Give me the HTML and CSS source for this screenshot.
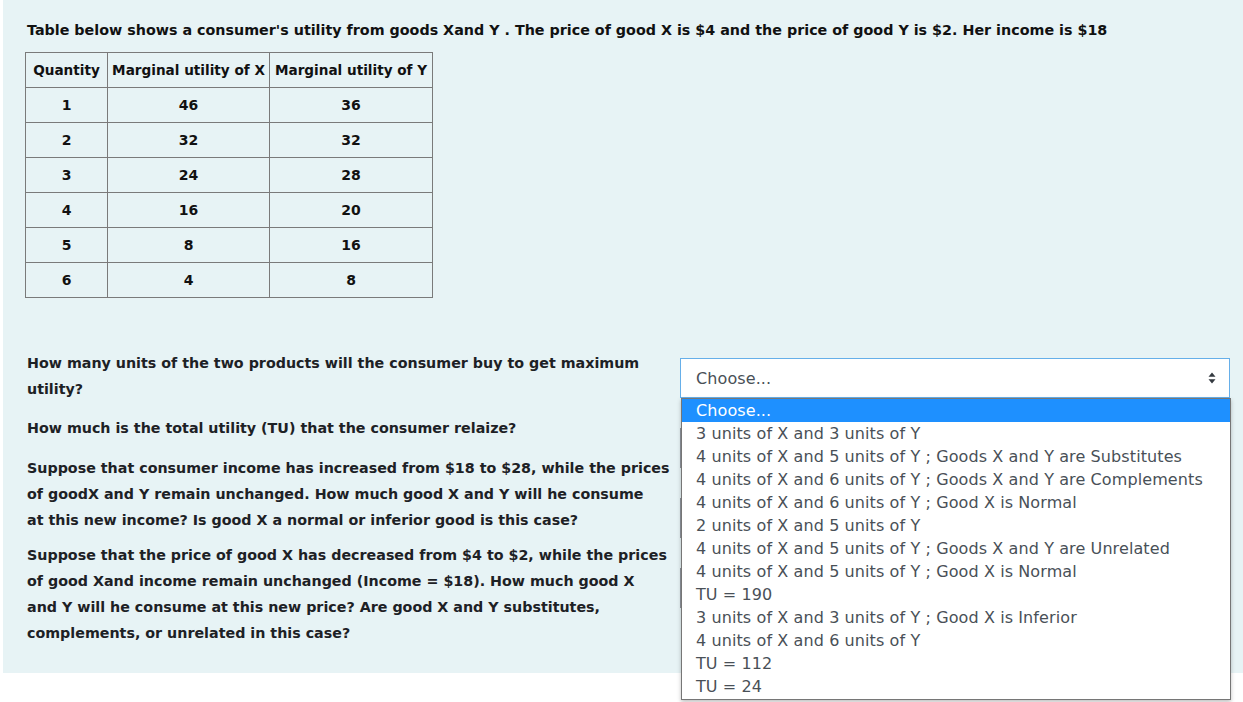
FILE: index.html
```html
<!DOCTYPE html>
<html>
<head>
<meta charset="utf-8">
<link rel="stylesheet" href="styles.css">
</head>
<body>
<div class="panel">
  <p class="title">Table below shows a consumer's utility from goods Xand Y . The price of good X is $4 and the price of good Y is $2. Her income is $18</p>
  <table class="mu">
    <tr><th class="c1">Quantity</th><th class="c2">Marginal utility of X</th><th class="c3">Marginal utility of Y</th></tr>
    <tr><td>1</td><td>46</td><td>36</td></tr>
    <tr><td>2</td><td>32</td><td>32</td></tr>
    <tr><td>3</td><td>24</td><td>28</td></tr>
    <tr><td>4</td><td>16</td><td>20</td></tr>
    <tr><td>5</td><td>8</td><td>16</td></tr>
    <tr><td>6</td><td>4</td><td>8</td></tr>
  </table>
  <div class="qa">
    <div class="questions">
      <p class="q q1">How many units of the two products will the consumer buy to get maximum utility?</p>
      <p class="q q2">How much is the total utility (TU) that the consumer relaize?</p>
      <p class="q q3">Suppose that consumer income has increased from $18 to $28, while the prices of goodX and Y remain unchanged. How much good X and Y will he consume<br>at this new income? Is good X a normal or inferior good is this case?</p>
      <p class="q q4">Suppose that the price of good X has decreased from $4 to $2, while the prices of good Xand income remain unchanged (Income = $18). How much good X<br>and Y will he consume at this new price? Are good X and Y substitutes, complements, or unrelated in this case?</p>
    </div>
    <div class="answers">
      <div class="ans">
        <div class="select focus">
          <span>Choose...</span>
          <svg class="arrows" width="8" height="12" viewBox="0 0 8 12"><path d="M4 0.5 L7.5 4.8 H0.5 Z M4 11.5 L7.5 7.2 H0.5 Z" fill="#343a40"/></svg>
        </div>
        <ul class="dropdown">
          <li class="sel">Choose...</li>
          <li>3 units of X and 3 units of Y</li>
          <li>4 units of X and 5 units of Y ; Goods X and Y are Substitutes</li>
          <li>4 units of X and 6 units of Y ; Goods X and Y are Complements</li>
          <li>4 units of X and 6 units of Y ; Good X is Normal</li>
          <li>2 units of X and 5 units of Y</li>
          <li>4 units of X and 5 units of Y ; Goods X and Y are Unrelated</li>
          <li>4 units of X and 5 units of Y ; Good X is Normal</li>
          <li>TU = 190</li>
          <li>3 units of X and 3 units of Y ; Good X is Inferior</li>
          <li>4 units of X and 6 units of Y</li>
          <li>TU = 112</li>
          <li>TU = 24</li>
        </ul>
      </div>
      <div class="ans"><div class="select"></div></div>
      <div class="ans"><div class="select"></div></div>
      <div class="ans"><div class="select"></div></div>
    </div>
  </div>
</div>
</body>
</html>
```

FILE: styles.css
```css
html, body {
  margin: 0;
  padding: 0;
  background: #ffffff;
}
body {
  font-family: "DejaVu Sans", "Liberation Sans", sans-serif;
  color: #1d2125;
  width: 1243px;
  height: 702px;
  overflow: hidden;
}
.panel {
  margin-left: 3px;
  background: #e7f3f5;
  height: 673px;
  padding: 20px 0 0 22px;
  box-sizing: border-box;
}
.title {
  margin: 0 0 12px 2px;
  font-size: 14.3px;
  font-weight: bold;
  line-height: 20px;
  color: #111;
  white-space: nowrap;
}
.mu {
  border-collapse: collapse;
  border: 1.5px solid #2a2a2a;
  font-size: 14px;
  font-weight: bold;
  color: #111;
}
.mu th, .mu td {
  border: 1px solid #7a7a7a;
  height: 34px;
  padding: 0;
  text-align: center;
}
.mu th { padding: 0 2px; font-size: 13.6px; }
.mu .c1 { width: 77px; }
.mu .c2 { width: 157px; }
.mu .c3 { width: 158px; }
.qa {
  margin-top: 52px;
  display: flex;
  align-items: flex-start;
}
.questions {
  width: 652px;
  flex: none;
}
.q {
  margin: 0;
  width: 650px;
  font-size: 14.28px;
  font-weight: bold;
  line-height: 26px;
  padding-left: 2px;
}
.q1 { margin-bottom: 13px; }
.q2 { margin-bottom: 14px; }
.q3 { margin-bottom: 9px; }
.answers {
  margin-left: 3px;
  width: 550px;
  padding-top: 8px;
  display: flex;
  flex-direction: column;
}
.ans {
  position: relative;
  margin-bottom: 30px;
}
.select {
  height: 40px;
  box-sizing: border-box;
  border: 1px solid #8f959e;
  background: #fff;
  display: flex;
  align-items: center;
  justify-content: space-between;
  padding: 0 13px 0 15px;
  font-size: 16px;
  letter-spacing: 0.1px;
  color: #495057;
}
.select.focus {
  border-color: #66afe9;
}
.arrows { display: block; }
.dropdown {
  position: absolute;
  top: 40px;
  left: 1px;
  width: 550px;
  box-sizing: border-box;
  margin: 0;
  padding: 0 0 1px;
  list-style: none;
  background: #fff;
  border: 1px solid #767676;
  box-shadow: 0 2px 4px rgba(0,0,0,0.25);
  font-size: 16px;
  letter-spacing: 0.1px;
  color: #495057;
  z-index: 10;
}
.dropdown li {
  height: 23px;
  line-height: 24px;
  padding-left: 14px;
  white-space: nowrap;
}
.dropdown li.sel {
  background: #1e90ff;
  color: #fff;
}
```
